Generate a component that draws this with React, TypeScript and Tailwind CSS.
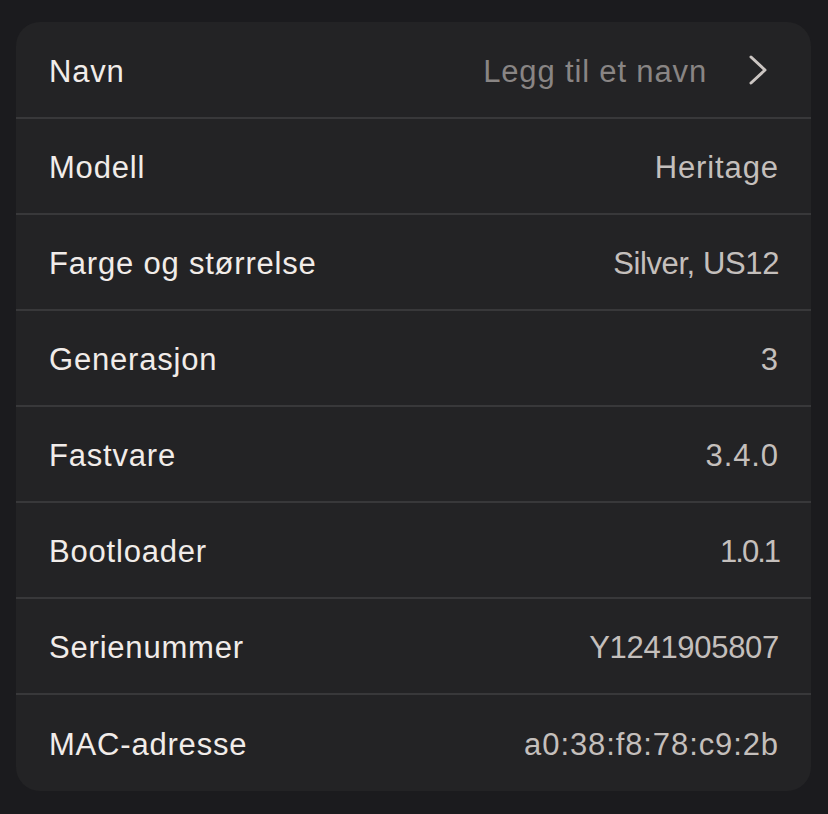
const rows: { label: string; value: string; tracking: string }[] = [
  { label: "Modell", value: "Heritage", tracking: "tracking-[0.9px]" },
  { label: "Farge og størrelse", value: "Silver, US12", tracking: "tracking-[-0.4px]" },
  { label: "Generasjon", value: "3", tracking: "tracking-[0.9px]" },
  { label: "Fastvare", value: "3.4.0", tracking: "tracking-[0.9px]" },
  { label: "Bootloader", value: "1.0.1", tracking: "tracking-[-2px]" },
  { label: "Serienummer", value: "Y1241905807", tracking: "tracking-[-0.3px]" },
  { label: "MAC-adresse", value: "a0:38:f8:78:c9:2b", tracking: "tracking-[0.9px]" },
];

export default function App() {
  return (
    <div
      className="min-h-[814px] w-full bg-[#1b1b1e] pt-[22px] pl-[16px] pr-[17px]"
      style={{ fontFamily: '"Liberation Sans", Arial, sans-serif' }}
    >
      <div className="rounded-[24px] bg-[#232325] overflow-hidden">
        {/* Name row with chevron */}
        <div className="flex h-[97px] items-center justify-between pl-[33px] pr-[32px] pt-[5px] border-b-2 border-[#38383a]">
          <span className="text-[31px] tracking-[0.8px] text-[#f1ece9]">Navn</span>
          <div className="flex items-center gap-[40px]">
            <span className="text-[31px] tracking-[0.85px] text-[#898584]">Legg til et navn</span>
            <svg
              width="22"
              height="32"
              viewBox="0 0 22 32"
              fill="none"
              stroke="#cbc5c2"
              strokeWidth={3}
              strokeLinecap="round"
              strokeLinejoin="round"
              className="mr-[10px] -mt-[4px]"
            >
              <path d="M4 3l14 13L4 29" />
            </svg>
          </div>
        </div>
        {rows.map((row, i) => (
          <div
            key={row.label}
            className={`flex h-[96px] items-center justify-between pl-[33px] pr-[32px] pt-[5px] ${
              i < rows.length - 1 ? "border-b-2 border-[#38383a]" : ""
            }`}
          >
            <span className="text-[31px] tracking-[0.8px] text-[#f1ece9]">{row.label}</span>
            <span className={`text-[31px] text-[#c4bfbc] ${row.tracking}`}>{row.value}</span>
          </div>
        ))}
      </div>
    </div>
  );
}
